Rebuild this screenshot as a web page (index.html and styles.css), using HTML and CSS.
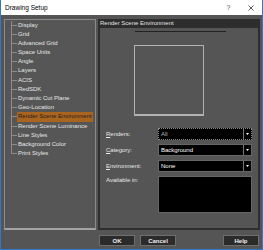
FILE: index.html
```html
<!DOCTYPE html>
<html lang="en">

<head>
    <meta charset="UTF-8">
    <title>Drawing Setup</title>
    <link rel="stylesheet" href="styles.css">
</head>

<body>
    <div class="window">
        <div class="titlebar">
            <span class="title">Drawing Setup</span>
            <span class="ctrl help">?</span>
            <span class="ctrl close">
                <svg width="6" height="6" viewBox="0 0 6 6"><path d="M0.5 0.5L5.5 5.5M5.5 0.5L0.5 5.5" stroke="#333" stroke-width="0.8" fill="none"/></svg>
            </span>
        </div>

        <div class="client">
            <div class="tree">
                <ul>
                    <li><span>Display</span></li>
                    <li><span>Grid</span></li>
                    <li><span>Advanced Grid</span></li>
                    <li><span>Space Units</span></li>
                    <li><span>Angle</span></li>
                    <li><span>Layers</span></li>
                    <li><span>ACIS</span></li>
                    <li><span>RedSDK</span></li>
                    <li><span>Dynamic Cut Plane</span></li>
                    <li><span>Geo-Location</span></li>
                    <li class="sel"><span>Render Scene Environment</span></li>
                    <li><span>Render Scene Luminance</span></li>
                    <li><span>Line Styles</span></li>
                    <li><span>Background Color</span></li>
                    <li><span>Print Styles</span></li>
                </ul>
            </div>

            <div class="panel">
                <div class="panel-head">Render Scene Environment</div>
                <div class="panel-body">
                    <div class="rule"></div>
                    <div class="preview"></div>
                    <div class="form">
                        <label><u>R</u>enders:</label>
                        <div class="select focus"><span class="dim">All</span><span class="arrow"><svg width="3" height="2" viewBox="0 0 3 2"><path d="M0 0H3L1.5 2Z" fill="#fff"/></svg></span></div>
                        <label><u>C</u>ategory:</label>
                        <div class="select"><span>Background</span><span class="arrow"><svg width="3" height="2" viewBox="0 0 3 2"><path d="M0 0H3L1.5 2Z" fill="#fff"/></svg></span></div>
                        <label><u>E</u>nvironment:</label>
                        <div class="select"><span>None</span><span class="arrow"><svg width="3" height="2" viewBox="0 0 3 2"><path d="M0 0H3L1.5 2Z" fill="#fff"/></svg></span></div>
                        <label class="top">Available in:</label>
                        <div class="listbox"></div>
                    </div>
                </div>
            </div>

            <div class="buttons">
                <div class="btn">OK</div>
                <div class="btn">Cancel</div>
                <div class="btn push">Help</div>
            </div>
        </div>
    </div>
</body>

</html>
```

FILE: styles.css
```css
html,
body {
    margin: 0;
}

body {
    width: 263px;
    height: 250px;
    font-family: "Liberation Sans", Arial, sans-serif;
    font-size: 6px;
}

.window {
    box-sizing: border-box;
    width: 263px;
    height: 250px;
    border: 1px solid #2f79c8;
    border-top: none;
    display: flex;
    flex-direction: column;
}

.titlebar {
    flex: none;
    height: 15px;
    background-color: #fff;
    color: #000;
    display: flex;
    align-items: center;
    padding-left: 4px;
}

.title {
    flex: 1;
    font-size: 6.5px;
}

.ctrl {
    width: 23px;
    display: flex;
    justify-content: center;
    align-items: center;
}

.help {
    color: #555;
    font-size: 7px;
}

.close {
    width: 22px;
}

.client {
    flex: 1;
    background-color: #555;
    display: grid;
    grid-template-columns: 92px 162px;
    grid-template-rows: 211px 11px;
    column-gap: 2px;
    row-gap: 5px;
    padding: 4px 2px 0 3px;
}

/* tree */
.tree {
    box-sizing: border-box;
    border: 1px solid #8a8a8a;
    border-bottom: 2px solid #a3a3a3;
    background-color: #565656;
}

.tree ul {
    margin: 0;
    padding: 0.5px 0 0 6px;
    list-style: none;
}

.tree li {
    display: flex;
    height: 9.2px;
    line-height: 9.2px;
    color: #e6e6e6;
    white-space: nowrap;
}

.tree li::before {
    content: "";
    flex: none;
    width: 6px;
    margin-right: 1px;
    background:
        linear-gradient(#8c8c8c, #8c8c8c) left top / 1px 100% no-repeat,
        linear-gradient(#8c8c8c, #8c8c8c) left center / 100% 1px no-repeat;
}

.tree li:last-child::before {
    background-size: 1px 50%, 100% 1px;
}

.tree li.sel span {
    background-color: #a9651f;
    color: #1c1c1c;
    padding: 0 1px;
    margin-left: -1px;
}

/* right panel */
.panel {
    display: flex;
    flex-direction: column;
}

.panel-head {
    flex: none;
    height: 9px;
    line-height: 9px;
    background-color: #2d2d2d;
    color: #e2e2e2;
    padding-left: 2px;
}

.panel-body {
    flex: 1;
    border: 2px solid #2e2e2e;
    border-top: none;
    display: flex;
    flex-direction: column;
}

.rule {
    margin: 3px 0 0 35px;
    width: 91px;
    height: 1px;
    background-color: #222;
}

.preview {
    box-sizing: border-box;
    margin: 13px 0 0 34px;
    width: 70px;
    height: 71px;
    border: 1px solid #b2b2b2;
    border-bottom-width: 2px;
}

.form {
    margin: 11.5px 0 0 6px;
    display: grid;
    grid-template-columns: 52px 94px;
    grid-template-rows: 12px 12px 12px 37px;
    row-gap: 4px;
    align-items: center;
    color: #e8e8e8;
}

.form label.top {
    align-self: start;
    padding-top: 1px;
}

.select {
    box-sizing: border-box;
    height: 12px;
    display: flex;
    align-items: center;
    background-color: #000;
    border: 1px solid #666;
    color: #fff;
}

.select.focus {
    border: 1px dotted #8a8a8a;
}

.select span {
    flex: 1;
    padding-left: 2px;
}

.select .dim {
    color: #b4b4b4;
}

.select .arrow {
    flex: none;
    width: 7px;
    padding: 0;
    align-self: stretch;
    border-left: 1px solid #777;
    display: flex;
    justify-content: center;
    align-items: center;
}

.listbox {
    box-sizing: border-box;
    align-self: stretch;
    background-color: #000;
    border: 1px solid #666;
}

/* buttons */
.buttons {
    grid-column: 2;
    display: flex;
    gap: 5px;
    padding: 0 1px;
}

.btn {
    box-sizing: border-box;
    width: 36px;
    height: 11px;
    border: 1px solid #6e6e6e;
    background-color: #2b2b2b;
    color: #eee;
    font-weight: bold;
    display: flex;
    justify-content: center;
    align-items: center;
}

.btn.push {
    margin-left: auto;
}
```
